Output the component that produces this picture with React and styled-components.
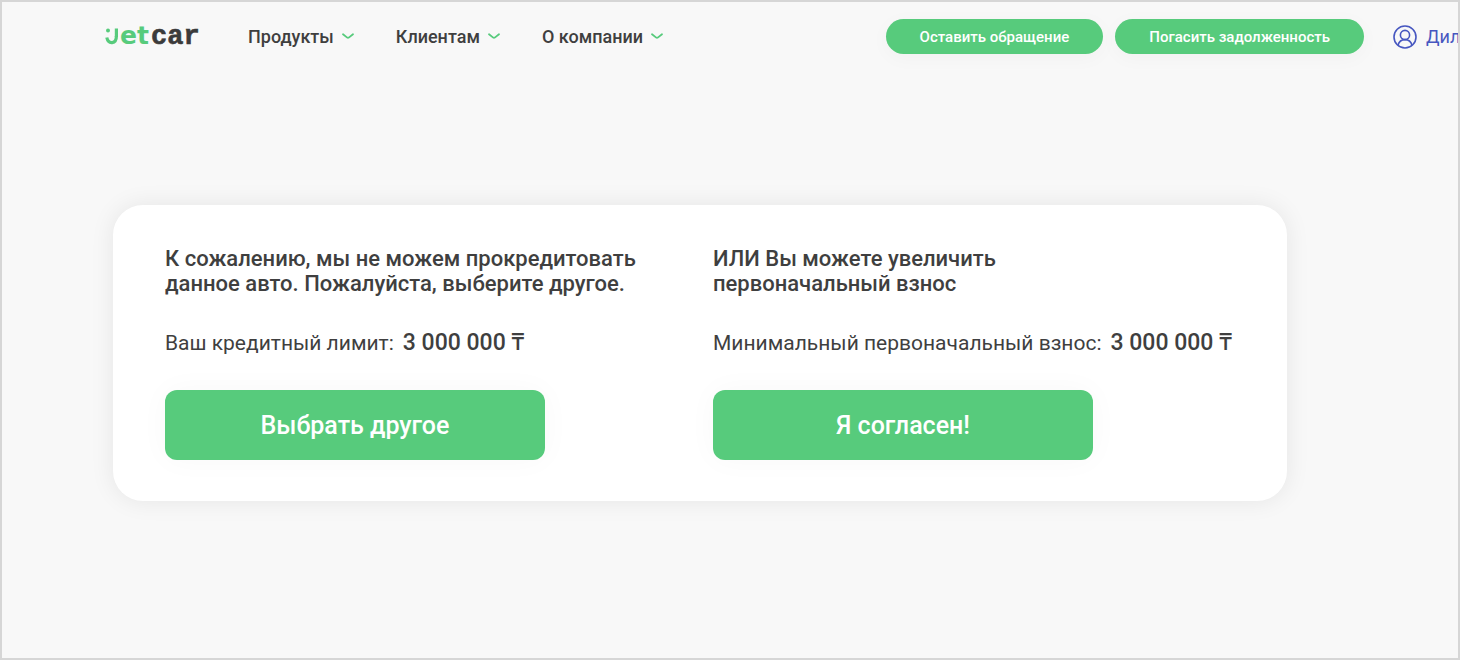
import React from "react";
import styled, { createGlobalStyle } from "styled-components";

const GlobalStyle = createGlobalStyle`
  *, *::before, *::after { box-sizing: border-box; }
  body {
    margin: 0;
    background: #f8f8f8;
    color: #3f3f3f;
    font-family: Roboto, "Noto Sans", sans-serif;
  }
  button { font-family: inherit; cursor: pointer; }
  h2, p { margin: 0; }
`;

const Page = styled.div`
  min-height: 100vh;
  border: 2px solid #d6d6d6;
  overflow: hidden;
`;

const Header = styled.header`
  display: flex;
  align-items: center;
  padding: 17px 0 17px 103px;
`;

const LogoLink = styled.a`
  display: flex;
  margin-right: 45px;
`;

const LogoArt = styled.svg`
  display: block;
  font-weight: 700;
`;

const Nav = styled.nav`
  display: flex;
  gap: 42px;
`;

const NavButton = styled.button`
  display: flex;
  align-items: center;
  gap: 8px;
  padding: 0;
  border: 0;
  background: none;
  color: inherit;
  font-size: 18px;
  font-weight: 500;
  line-height: 24px;
  white-space: nowrap;
`;

const Actions = styled.div`
  display: flex;
  gap: 12px;
  margin-left: auto;
`;

const PillButton = styled.button`
  height: 35px;
  padding: 0 34px;
  border: 0;
  border-radius: 18px;
  background: #57cb7c;
  box-shadow: 0 4px 20px rgba(0, 0, 0, 0.03);
  color: #fff;
  font-size: 15px;
  font-weight: 500;
  white-space: nowrap;
`;

const UserLink = styled.a`
  display: flex;
  align-items: center;
  gap: 9px;
  flex: 0 0 65px;
  width: 65px;
  margin-left: 29px;
  color: #4757c0;
  font-size: 18px;
  line-height: 24px;
  text-decoration: none;
  white-space: nowrap;
  svg { flex: none; }
`;

const Main = styled.main`
  padding: 134px 171px 40px 111px;
`;

const Card = styled.section`
  display: grid;
  grid-template-columns: repeat(2, minmax(0, 1fr));
  gap: 26px;
  padding: 41px 52px;
  border-radius: 30px;
  background: #fff;
  box-shadow: 0 0 24px rgba(0, 0, 0, 0.08);
`;

const Option = styled.div`
  display: flex;
  flex-direction: column;
  align-items: flex-start;
  gap: 34px;
`;

const Title = styled.h2`
  font-size: 22px;
  font-weight: 500;
  line-height: 25px;
  white-space: nowrap;
`;

const Limit = styled.p`
  display: flex;
  align-items: baseline;
  gap: 9px;
  font-size: 21px;
  line-height: 25px;
  white-space: nowrap;
  strong { font-size: 23px; font-weight: 500; }
`;

const MainButton = styled.button`
  width: 380px;
  max-width: 100%;
  height: 70px;
  border: 0;
  border-radius: 12px;
  background: #57cb7c;
  box-shadow: 0 0 30px rgba(0, 0, 0, 0.03);
  color: #fff;
  font-size: 25px;
  font-weight: 500;
`;

const Chevron = () => (
  <svg width="12" height="7" viewBox="0 0 12 7" fill="none" aria-hidden="true">
    <path d="M1 1.2 L5.2 4.6 Q6 5.1 6.8 4.6 L11 1.2" stroke="#57cb7c" strokeWidth="1.8" strokeLinecap="round" />
  </svg>
);

const Logo = () => (
  <LogoArt width="98" height="35" viewBox="0 0 98 35" role="img" aria-label="jetcar">
    <circle cx="3" cy="11.5" r="2" fill="#57cb7c" />
    <path d="M11.4 9.5 V18" stroke="#57cb7c" strokeWidth="3.2" fill="none" />
    <path d="M1.8 18.5 C3.3 25.6 11.4 25.4 11.4 17" stroke="#57cb7c" strokeWidth="3.2" fill="none" />
    <text x="15" y="25" fill="#57cb7c" fontSize="25" fontFamily="'DejaVu Sans', sans-serif">et</text>
    <text x="46" y="25" fill="#3b3b3b" stroke="#3b3b3b" strokeWidth="0.6" fontSize="27" fontFamily="'Liberation Mono', monospace">car</text>
  </LogoArt>
);

const UserIcon = () => (
  <svg width="24" height="24" viewBox="0 0 24 24" fill="none" stroke="#4757c0" strokeWidth="1.6" aria-hidden="true">
    <circle cx="12" cy="12" r="11" />
    <circle cx="12" cy="10" r="4.6" />
    <path d="M5 20.2 C6 16.6 8.8 14.6 12 14.6 S18 16.6 19 20.2" />
  </svg>
);

const menu = ["Продукты", "Клиентам", "О компании"];
const actions = ["Оставить обращение", "Погасить задолженность"];

const options = [
  {
    title: ["К сожалению, мы не можем прокредитовать", "данное авто. Пожалуйста, выберите другое."],
    label: "Ваш кредитный лимит:",
    amount: "3 000 000 ₸",
    action: "Выбрать другое",
  },
  {
    title: ["ИЛИ Вы можете увеличить", "первоначальный взнос"],
    label: "Минимальный первоначальный взнос:",
    amount: "3 000 000 ₸",
    action: "Я согласен!",
  },
];

export default function App() {
  return (
    <Page>
      <GlobalStyle />
      <Header>
        <LogoLink href="#">
          <Logo />
        </LogoLink>
        <Nav>
          {menu.map((item) => (
            <NavButton key={item} type="button">
              {item}
              <Chevron />
            </NavButton>
          ))}
        </Nav>
        <Actions>
          {actions.map((item) => (
            <PillButton key={item} type="button">{item}</PillButton>
          ))}
        </Actions>
        <UserLink href="#">
          <UserIcon />
          Дил
        </UserLink>
      </Header>
      <Main>
        <Card>
          {options.map((option) => (
            <Option key={option.action}>
              <Title>
                {option.title[0]}
                <br />
                {option.title[1]}
              </Title>
              <Limit>
                <span>{option.label}</span>
                <strong>{option.amount}</strong>
              </Limit>
              <MainButton type="button">{option.action}</MainButton>
            </Option>
          ))}
        </Card>
      </Main>
    </Page>
  );
}
